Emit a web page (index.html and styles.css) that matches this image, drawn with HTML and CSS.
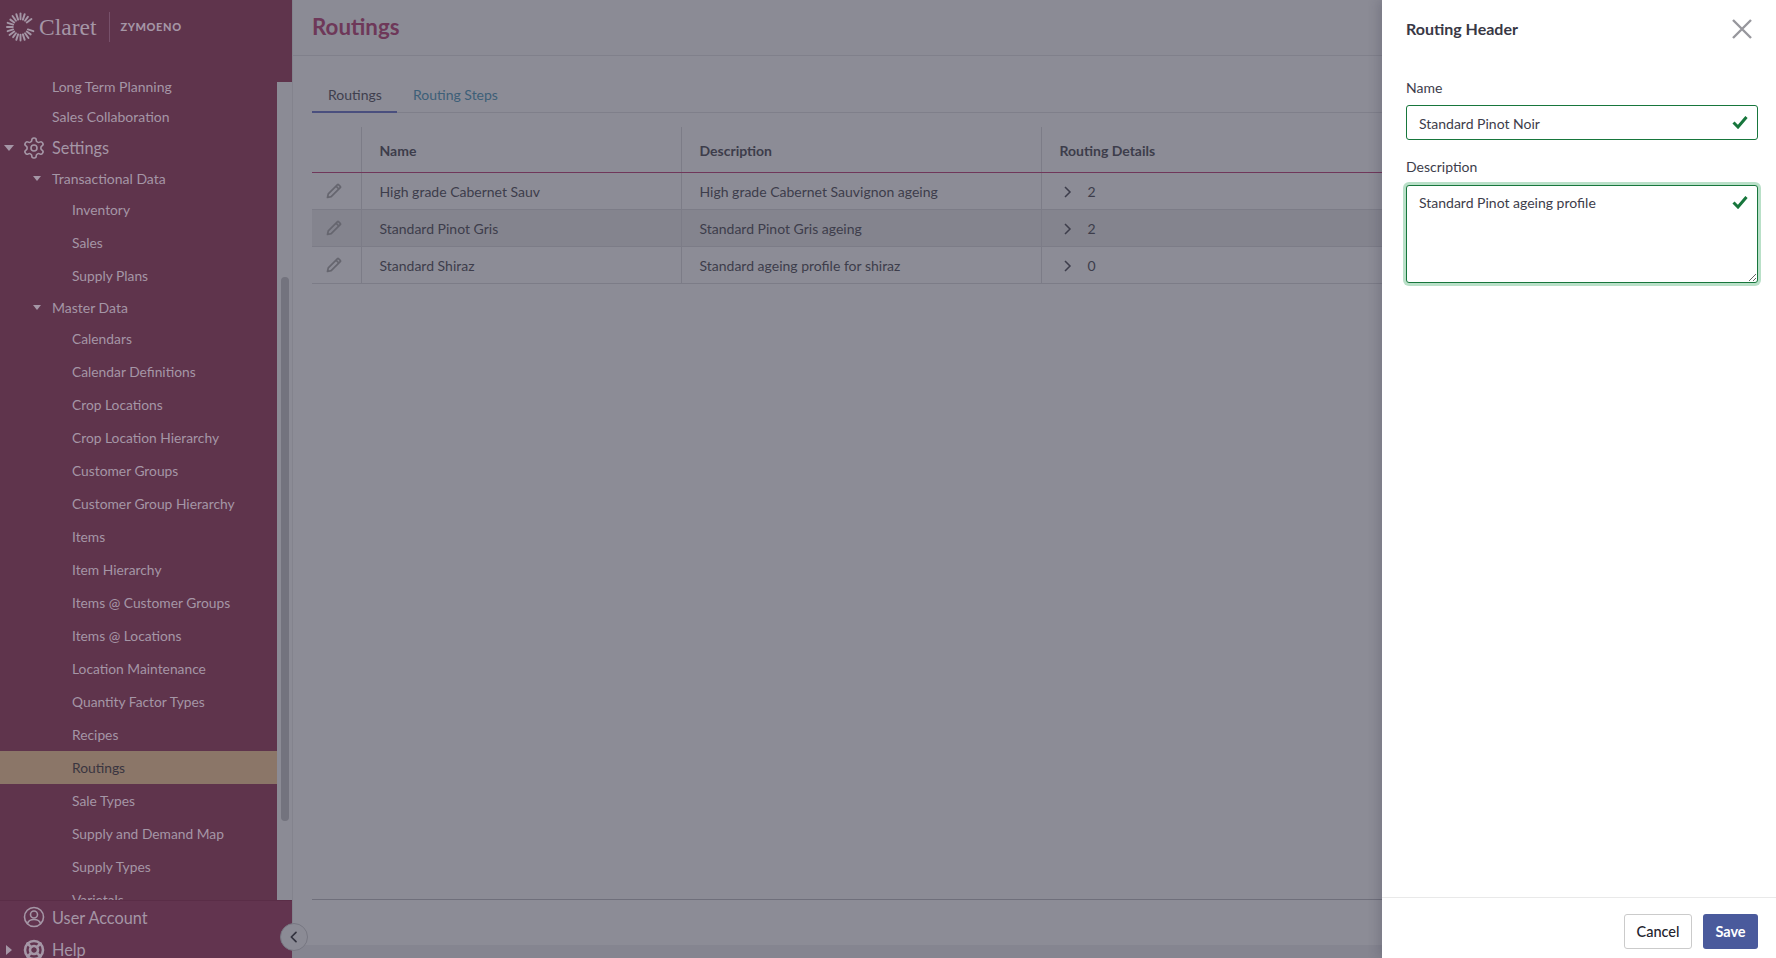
FILE: index.html
```html
<!DOCTYPE html>
<html lang="en">
<head>
<meta charset="utf-8">
<title>Routings</title>
<link rel="stylesheet" href="styles.css">
</head>
<body>
<div class="app">
  <aside class="sidebar">
    <div class="brand">
      <svg class="brand-mark" viewBox="-15 -15 30 30" aria-hidden="true">
        <g class="rays">
          <line x1="0" y1="-8" x2="0" y2="-14"/><line transform="rotate(18)" x1="0" y1="-8" x2="0" y2="-14"/>
          <line transform="rotate(36)" x1="0" y1="-8" x2="0" y2="-13"/><line transform="rotate(54)" x1="0" y1="-8" x2="0" y2="-14"/>
          <line transform="rotate(108)" x1="0" y1="-8" x2="0" y2="-14"/><line transform="rotate(126)" x1="0" y1="-8" x2="0" y2="-13"/>
          <line transform="rotate(144)" x1="0" y1="-8" x2="0" y2="-14"/><line transform="rotate(162)" x1="0" y1="-8" x2="0" y2="-14"/>
          <line transform="rotate(180)" x1="0" y1="-8" x2="0" y2="-14"/><line transform="rotate(198)" x1="0" y1="-8" x2="0" y2="-14"/>
          <line transform="rotate(216)" x1="0" y1="-8" x2="0" y2="-13"/><line transform="rotate(234)" x1="0" y1="-8" x2="0" y2="-14"/>
          <line transform="rotate(252)" x1="0" y1="-8" x2="0" y2="-14"/><line transform="rotate(270)" x1="0" y1="-8" x2="0" y2="-14"/>
          <line transform="rotate(288)" x1="0" y1="-8" x2="0" y2="-14"/><line transform="rotate(306)" x1="0" y1="-8" x2="0" y2="-13"/>
          <line transform="rotate(324)" x1="0" y1="-8" x2="0" y2="-14"/><line transform="rotate(342)" x1="0" y1="-8" x2="0" y2="-14"/>
        </g>
      </svg>
      <span class="brand-name">Claret</span>
      <span class="brand-divider"></span>
      <span class="brand-org">ZYMOENO</span>
    </div>
    <div class="sidebar-body">
      <nav class="nav">
        <a class="nav-group">Long Term Planning</a>
        <a class="nav-group">Sales Collaboration</a>
        <a class="nav-section">
          <span class="caret caret-down"></span>
          <svg class="nav-icon" viewBox="0 0 24 24" aria-hidden="true"><path d="M12.22 2h-.44a2 2 0 0 0-2 2v.18a2 2 0 0 1-1 1.73l-.43.25a2 2 0 0 1-2 0l-.15-.08a2 2 0 0 0-2.73.73l-.22.38a2 2 0 0 0 .73 2.73l.15.1a2 2 0 0 1 1 1.72v.51a2 2 0 0 1-1 1.74l-.15.09a2 2 0 0 0-.73 2.73l.22.38a2 2 0 0 0 2.73.73l.15-.08a2 2 0 0 1 2 0l.43.25a2 2 0 0 1 1 1.73V20a2 2 0 0 0 2 2h.44a2 2 0 0 0 2-2v-.18a2 2 0 0 1 1-1.73l.43-.25a2 2 0 0 1 2 0l.15.08a2 2 0 0 0 2.73-.73l.22-.39a2 2 0 0 0-.73-2.73l-.15-.08a2 2 0 0 1-1-1.74v-.5a2 2 0 0 1 1-1.74l.15-.09a2 2 0 0 0 .73-2.73l-.22-.38a2 2 0 0 0-2.73-.73l-.15.08a2 2 0 0 1-2 0l-.43-.25a2 2 0 0 1-1-1.73V4a2 2 0 0 0-2-2z"/><circle cx="12" cy="12" r="3"/></svg>
          <span>Settings</span>
        </a>
        <a class="nav-group"><span class="caret caret-small"></span>Transactional Data</a>
        <a class="nav-item">Inventory</a>
        <a class="nav-item">Sales</a>
        <a class="nav-item">Supply Plans</a>
        <a class="nav-group"><span class="caret caret-small"></span>Master Data</a>
        <a class="nav-item">Calendars</a>
        <a class="nav-item">Calendar Definitions</a>
        <a class="nav-item">Crop Locations</a>
        <a class="nav-item">Crop Location Hierarchy</a>
        <a class="nav-item">Customer Groups</a>
        <a class="nav-item">Customer Group Hierarchy</a>
        <a class="nav-item">Items</a>
        <a class="nav-item">Item Hierarchy</a>
        <a class="nav-item">Items @ Customer Groups</a>
        <a class="nav-item">Items @ Locations</a>
        <a class="nav-item">Location Maintenance</a>
        <a class="nav-item">Quantity Factor Types</a>
        <a class="nav-item">Recipes</a>
        <a class="nav-item is-active">Routings</a>
        <a class="nav-item">Sale Types</a>
        <a class="nav-item">Supply and Demand Map</a>
        <a class="nav-item">Supply Types</a>
        <a class="nav-item">Varietals</a>
      </nav>
      <div class="scrolltrack"><div class="scrollthumb"></div></div>
    </div>
    <div class="sidebar-foot">
      <a class="nav-section foot-row">
        <span class="caret caret-none"></span>
        <svg class="nav-icon" viewBox="0 0 24 24" aria-hidden="true"><circle cx="12" cy="12" r="9.500"/><circle cx="12" cy="9.500" r="3.500"/><path d="M5.500 18.500c.8-2.800 3.500-4 6.500-4s5.700 1.200 6.500 4"/></svg>
        <span>User Account</span>
      </a>
      <a class="nav-section foot-row">
        <span class="caret caret-right"></span>
        <svg class="nav-icon nav-icon-bold" viewBox="0 0 24 24" aria-hidden="true"><circle cx="12" cy="12" r="9"/><circle cx="12" cy="12" r="4"/><path d="M5.500 5.500l3.700 3.700M14.800 14.800l3.700 3.700M18.500 5.500l-3.700 3.700M9.200 14.800l-3.700 3.700"/></svg>
        <span>Help</span>
      </a>
      <button class="collapse" type="button" aria-label="Collapse">
        <svg viewBox="0 0 24 24" aria-hidden="true"><path d="M15 5l-7 7 7 7"/></svg>
      </button>
    </div>
  </aside>

  <main class="main">
    <header class="page-head"><h1>Routings</h1></header>
    <div class="content">
      <div class="tabs">
        <a class="tab is-current">Routings</a>
        <a class="tab">Routing Steps</a>
      </div>
      <table class="grid">
        <thead>
          <tr><th class="col-edit"></th><th class="col-name">Name</th><th class="col-desc">Description</th><th>Routing Details</th></tr>
        </thead>
        <tbody>
          <tr>
            <td class="cell-edit"><svg class="pencil" viewBox="0 0 16 16" aria-hidden="true"><path d="M1.500 14.500l.8-3.700L11.300 1.800a1 1 0 0 1 1.400 0l1.500 1.500a1 1 0 0 1 0 1.400L5.200 13.700z"/><path d="M10 3.200l2.800 2.800"/></svg></td>
            <td>High grade Cabernet Sauv</td><td>High grade Cabernet Sauvignon ageing</td>
            <td><div class="details"><svg class="chev" viewBox="0 0 10 14" aria-hidden="true"><path d="M3 2l5 5-5 5"/></svg><span>2</span></div></td>
          </tr>
          <tr class="is-hover">
            <td class="cell-edit"><svg class="pencil" viewBox="0 0 16 16" aria-hidden="true"><path d="M1.500 14.500l.8-3.700L11.300 1.800a1 1 0 0 1 1.400 0l1.500 1.500a1 1 0 0 1 0 1.400L5.200 13.700z"/><path d="M10 3.200l2.800 2.800"/></svg></td>
            <td>Standard Pinot Gris</td><td>Standard Pinot Gris ageing</td>
            <td><div class="details"><svg class="chev" viewBox="0 0 10 14" aria-hidden="true"><path d="M3 2l5 5-5 5"/></svg><span>2</span></div></td>
          </tr>
          <tr>
            <td class="cell-edit"><svg class="pencil" viewBox="0 0 16 16" aria-hidden="true"><path d="M1.500 14.500l.8-3.700L11.300 1.800a1 1 0 0 1 1.400 0l1.500 1.500a1 1 0 0 1 0 1.400L5.200 13.700z"/><path d="M10 3.200l2.800 2.800"/></svg></td>
            <td>Standard Shiraz</td><td>Standard ageing profile for shiraz</td>
            <td><div class="details"><svg class="chev" viewBox="0 0 10 14" aria-hidden="true"><path d="M3 2l5 5-5 5"/></svg><span>0</span></div></td>
          </tr>
        </tbody>
      </table>
      <div class="grid-foot"></div>
    </div>
    <div class="gutter"></div>
  </main>

  <section class="drawer">
    <div class="drawer-head">
      <h2>Routing Header</h2>
      <button class="close" type="button" aria-label="Close">
        <svg viewBox="0 0 20 20" aria-hidden="true"><path d="M1 1l18 18M19 1L1 19"/></svg>
      </button>
    </div>
    <form class="drawer-body">
      <label class="field-label" for="f-name">Name</label>
      <div class="field">
        <input id="f-name" class="control" type="text" value="Standard Pinot Noir">
        <svg class="valid" viewBox="0 0 16 14" aria-hidden="true"><path d="M1.500 7.500l4.500 4.500 8.500-10"/></svg>
      </div>
      <label class="field-label" for="f-desc">Description</label>
      <div class="field">
        <textarea id="f-desc" class="control control-area is-focus">Standard Pinot ageing profile</textarea>
        <svg class="valid" viewBox="0 0 16 14" aria-hidden="true"><path d="M1.500 7.500l4.500 4.500 8.500-10"/></svg>
      </div>
    </form>
    <div class="drawer-foot">
      <button class="btn btn-plain" type="button">Cancel</button>
      <button class="btn btn-primary" type="button">Save</button>
    </div>
  </section>
</div>
</body>
</html>
```

FILE: styles.css
```css
* { box-sizing: border-box; }

html, body {
  margin: 0;
  height: 100%;
  overflow: hidden;
}

body {
  font-family: "Lato", "Noto Sans", sans-serif;
  font-size: 14px;
  color: #3d3d4b;
  background: #8b8b95;
}

.app {
  position: relative;
  display: flex;
  width: 100%;
  height: 958px;
  overflow: hidden;
}

/* sidebar */
.sidebar {
  position: relative;
  flex: 0 0 292px;
  display: flex;
  flex-direction: column;
  height: 100%;
  background: #5f344c;
  color: #a596a6;
}

.brand {
  flex: 0 0 72px;
  display: flex;
  align-items: flex-start;
  padding: 12px 0 0 6px;
}

.brand-mark {
  width: 29px;
  height: 30px;
  flex: none;
}

.rays line {
  stroke: #a596a6;
  stroke-width: 2;
  stroke-linecap: round;
}

.brand-name {
  margin-left: 4px;
  font-family: "Liberation Serif", serif;
  font-size: 23.500px;
  line-height: 30px;
  color: #a596a6;
}

.brand-divider {
  width: 1px;
  height: 30px;
  margin-left: 13px;
  background: #77506a;
}

.brand-org {
  margin-left: 10px;
  font-weight: 900;
  font-size: 11px;
  line-height: 30px;
  letter-spacing: 0.6px;
}

.sidebar-body {
  flex: 1;
  min-height: 0;
  display: flex;
}

.nav {
  flex: 0 0 277px;
  overflow: hidden;
}

.nav-group,
.nav-item,
.nav-section {
  display: flex;
  align-items: center;
  white-space: nowrap;
}

.nav-group {
  position: relative;
  height: 30px;
  padding-left: 52px;
  font-size: 14px;
}

.nav-group:nth-child(-n+2) {
  padding-bottom: 2px;
}

.nav-item {
  height: 33px;
  padding-left: 72px;
  font-size: 13.800px;
}

.nav-item.is-active {
  background: #8b7668;
  color: #3a3540;
}

.nav-section {
  height: 31px;
  font-size: 16.300px;
}

.caret {
  flex: 0 0 22px;
  display: block;
  width: 0;
  height: 0;
}

.caret-down::before,
.caret-right::before,
.caret-small::before {
  content: "";
  display: block;
  width: 0;
  height: 0;
  border-style: solid;
  border-color: transparent;
}

.caret-down::before {
  margin-left: 4px;
  margin-top: -3px;
  border-width: 6px 5px 0;
  border-top-color: #a596a6;
}

.caret-right::before {
  margin-left: 6px;
  margin-top: -5px;
  border-width: 5px 0 5px 6px;
  border-left-color: #a596a6;
}

.caret-small {
  position: absolute;
  left: 33px;
  top: 13px;
}

.caret-small::before {
  border-width: 5px 4px 0;
  border-top-color: #a596a6;
}

.nav-icon {
  flex: none;
  width: 24px;
  height: 24px;
  margin-right: 6px;
  fill: none;
  stroke: #a596a6;
  stroke-width: 1.600;
  stroke-linejoin: round;
  stroke-linecap: round;
}

.nav-icon-bold {
  stroke-width: 2.600;
}

.scrolltrack {
  flex: 0 0 15px;
  margin-top: 10px;
  background: #8b8b95;
  display: flex;
  justify-content: center;
}

.scrollthumb {
  width: 8px;
  height: 544px;
  margin-top: 195px;
  border-radius: 4px;
  background: #73737e;
}

.sidebar-foot {
  position: relative;
  flex: 0 0 58px;
  min-height: 0;
  border-top: 1px solid #5a2d47;
  background: #62344f;
}

.foot-row {
  height: 32px;
}

.foot-row + .foot-row {
  height: 33px;
}

.collapse {
  position: absolute;
  right: -16px;
  top: 22px;
  width: 28px;
  height: 28px;
  padding: 5px;
  border: 1px solid #777782;
  border-radius: 50%;
  background: #8b8b95;
}

.collapse svg {
  display: block;
  width: 16px;
  height: 16px;
  fill: none;
  stroke: #33333f;
  stroke-width: 2.600;
  stroke-linecap: round;
  stroke-linejoin: round;
}

/* main */
.main {
  flex: 1;
  min-width: 0;
  display: flex;
  flex-direction: column;
  border-left: 1px solid #83838d;
}

.page-head {
  flex: 0 0 56px;
  display: flex;
  align-items: center;
  padding-left: 19px;
  border-bottom: 1px solid #80808b;
}

.page-head h1 {
  margin: 0 0 3px;
  font-size: 22.300px;
  font-weight: 700;
  color: #6e3859;
}

.content {
  flex: 1;
  min-height: 0;
  display: flex;
  flex-direction: column;
  padding: 22px 0 0 19px;
  background: #8c8c96;
}

.tabs {
  display: flex;
  height: 35px;
  border-bottom: 1px solid #7f7f8a;
}

.tab {
  display: flex;
  align-items: center;
  height: 35px;
  padding: 0 16px 2px;
  font-size: 14px;
  color: #3d5f78;
}

.tab.is-current {
  width: 85px;
  padding-bottom: 0;
  color: #3f3f4e;
  border-bottom: 2px solid #4a4f7e;
}

.grid {
  width: 100%;
  margin-top: 14px;
  border-collapse: collapse;
  table-layout: fixed;
}

.grid th,
.grid td {
  padding: 2px 0 0 18px;
  text-align: left;
  border-left: 1px solid #7c7c87;
  white-space: nowrap;
}

.grid th:first-child,
.grid td:first-child {
  border-left: 0;
  padding: 0;
}

.grid th {
  height: 45px;
  font-size: 14px;
  font-weight: 700;
  color: #3d3d4b;
  border-bottom: 1px solid #70375a;
}

.grid td {
  height: 37px;
  font-size: 14px;
  border-bottom: 1px solid #7c7c87;
}

.grid tr.is-hover td {
  background: #84848e;
}

.col-edit { width: 49px; }
.col-name { width: 320px; }
.col-desc { width: 360px; }

.pencil {
  display: block;
  width: 16px;
  height: 16px;
  margin-left: 14px;
  fill: none;
  stroke: #66666f;
  stroke-width: 1.700;
  stroke-linejoin: round;
}

.details {
  display: flex;
  align-items: center;
  gap: 16px;
}

.chev {
  width: 10px;
  height: 14px;
  margin-left: 2px;
  fill: none;
  stroke: #3d3d4b;
  stroke-width: 1.500;
}

.grid-foot {
  margin-top: auto;
  height: 46px;
  border-top: 1px solid #6f6f7b;
}

.gutter {
  flex: 0 0 13px;
  background: #858590;
}

/* drawer */
.drawer {
  position: absolute;
  top: 0;
  right: 0;
  bottom: 0;
  width: 394px;
  display: flex;
  flex-direction: column;
  background: #fff;
  box-shadow: -4px 0 10px rgba(40, 40, 60, 0.18);
}

.drawer-head {
  flex: 0 0 58px;
  display: flex;
  align-items: center;
  justify-content: space-between;
  padding: 0 24px;
}

.drawer-head h2 {
  margin: 0 0 2px;
  font-size: 16px;
  font-weight: 700;
  color: #383845;
}

.close {
  width: 20px;
  height: 20px;
  padding: 0;
  border: 0;
  background: none;
}

.close svg {
  display: block;
  width: 20px;
  height: 20px;
  fill: none;
  stroke: #97979d;
  stroke-width: 2.400;
}

.drawer-body {
  flex: 1;
  padding: 21px 18px 0 24px;
}

.field-label {
  display: block;
  height: 26px;
  font-size: 14px;
  line-height: 18px;
  color: #3d3d4b;
}

.field {
  position: relative;
  margin-bottom: 18px;
}

.field + .field-label {
  height: 27px;
}

.control {
  display: block;
  width: 100%;
  height: 35px;
  padding: 2px 40px 0 12px;
  border: 1px solid #17763c;
  border-radius: 3px;
  outline: 0;
  background: #fff;
  font-family: inherit;
  font-size: 14px;
  color: #3d3d4b;
}

.control-area {
  height: 98px;
  padding-top: 8px;
  resize: vertical;
}

.control-area.is-focus {
  box-shadow: 0 0 0 3px #b9e0c8;
}

.valid {
  position: absolute;
  right: 10px;
  top: 10px;
  width: 16px;
  height: 14px;
  fill: none;
  stroke: #17763c;
  stroke-width: 3;
}

.drawer-foot {
  flex: 0 0 61px;
  display: flex;
  justify-content: flex-end;
  gap: 11px;
  padding: 16px 18px 0 0;
  border-top: 1px solid #e9e9e9;
}

.btn {
  height: 35px;
  border-radius: 3px;
  font-family: inherit;
  font-size: 14.500px;
  font-weight: 700;
}

.btn-plain {
  width: 68px;
  border: 1px solid #cbcbcb;
  background: #fff;
  font-weight: 500;
  color: #23232d;
}

.btn-primary {
  width: 55px;
  border: 0;
  background: #4a5a9c;
  color: #fff;
}
```
